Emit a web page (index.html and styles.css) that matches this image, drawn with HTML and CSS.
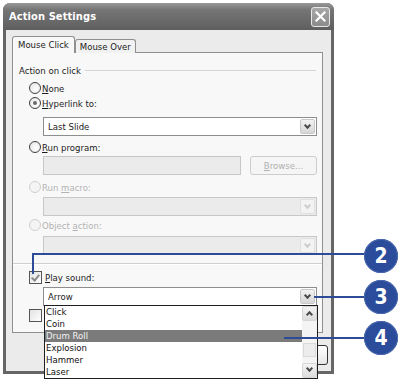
FILE: index.html
```html
<!DOCTYPE html>
<html lang="en">
<head>
    <meta charset="UTF-8">
    <title>Action Settings</title>
    <link rel="stylesheet" href="styles.css">
</head>
<body>
    <div class="stage">
        <div class="window">
            <div class="titlebar">
                <span class="title">Action Settings</span>
                <span class="close">
                    <svg width="11" height="11" viewBox="0 0 11 11"><path d="M1.5 1.5 L9.5 9.5 M9.5 1.5 L1.5 9.5" stroke="#fff" stroke-width="2.2" stroke-linecap="square"/></svg>
                </span>
            </div>
            <div class="client">
                <div class="tabs">
                    <div class="tab active">Mouse Click</div>
                    <div class="tab">Mouse Over</div>
                </div>
                <div class="panel">
                    <div class="grouphead"><span>Action on click</span><span class="rule"></span></div>

                    <div class="opt opt-none"><span class="radio"></span><span><u>N</u>one</span></div>
                    <div class="opt opt-link"><span class="radio checked"></span><span><u>H</u>yperlink to:</span></div>
                    <div class="field select f-link"><span class="value">Last Slide</span><span class="drop"></span></div>

                    <div class="opt opt-prog"><span class="radio"></span><span><u>R</u>un program:</span></div>
                    <div class="field-row f-prog">
                        <div class="textbox"></div>
                        <div class="browse"><u>B</u>rowse...</div>
                    </div>

                    <div class="opt opt-macro disabled"><span class="radio"></span><span>Run <u>m</u>acro:</span></div>
                    <div class="field select disabled f-macro"><span class="value"></span><span class="drop"></span></div>

                    <div class="opt opt-obj disabled"><span class="radio"></span><span>Object <u>a</u>ction:</span></div>
                    <div class="field select disabled f-obj"><span class="value"></span><span class="drop"></span></div>

                    <div class="separator"></div>

                    <div class="opt opt-sound"><span class="check checked"></span><span><u>P</u>lay sound:</span></div>
                    <div class="field select f-sound"><span class="value">Arrow</span><span class="drop"></span></div>

                    <!-- label is covered by the open list, only its first letter peeks out -->
                    <div class="opt opt-hl"><span class="check"></span><span class="covered">Highlight click</span></div>
                </div>
                <div class="actions">
                    <div class="btn">OK</div>
                    <div class="btn">Cancel</div>
                </div>
            </div>
        </div>

        <!-- open drop-down list of the Play sound box -->
        <div class="listbox">
            <ul class="items">
                <li>Click</li>
                <li>Coin</li>
                <li class="selected">Drum Roll</li>
                <li>Explosion</li>
                <li>Hammer</li>
                <li>Laser</li>
            </ul>
            <div class="scrollbar">
                <span class="sb-btn up"></span>
                <span class="sb-thumb"></span>
                <span class="sb-btn down"></span>
            </div>
        </div>

        <!-- numbered callouts -->
        <div class="callout-line c2-h"></div>
        <div class="callout-line c2-v"></div>
        <div class="callout-line c3-h"></div>
        <div class="callout-line c4-h"></div>
        <div class="badge b2">2</div>
        <div class="badge b3">3</div>
        <div class="badge b4">4</div>
    </div>
</body>
</html>
```

FILE: styles.css
```css
body {
    margin: 0;
    background: #fff;
    font-family: "DejaVu Sans Condensed", "DejaVu Sans", sans-serif;
    font-size: 9.5px;
    color: #1c1c1c;
}
.stage {
    position: relative;
    width: 400px;
    height: 382px;
    overflow: hidden;
}
.window {
    margin: 3px 0 0 3px;
    width: 331px;
    height: 371px;
    background: #666;
    border-radius: 7px 7px 0 0;
    display: flex;
    flex-direction: column;
}
.titlebar {
    height: 27px;
    flex: none;
    display: flex;
    align-items: center;
    justify-content: space-between;
    padding: 0 4px 0 6px;
    border-radius: 7px 7px 0 0;
    background: linear-gradient(#9a9a9a, #757575 25%, #686868 70%, #5e5e5e);
}
.title {
    color: #fff;
    font-weight: bold;
    font-size: 11px;
    letter-spacing: 0.1px;
}
.close {
    width: 17px;
    height: 18px;
    border: 1px solid #e8e8e8;
    border-radius: 3px;
    background: linear-gradient(#a8a8a8, #8a8a8a);
    display: flex;
    align-items: center;
    justify-content: center;
}
.client {
    flex: 1;
    margin: 0 3px 3px 3px;
    background: #ebebeb;
    padding-top: 6px;
}
.tabs {
    display: flex;
    align-items: flex-end;
    padding-left: 6px;
    height: 17px;
    margin-bottom: -1px;
}
.tab {
    height: 13px;
    line-height: 13px;
    padding: 0 4px;
    border: 1px solid #8f8f8f;
    border-bottom: 0;
    border-radius: 3px 3px 0 0;
    background: #f1f1f1;
    color: #222;
}
.tab.active {
    height: 16px;
    line-height: 16px;
    padding: 0 5px;
    background: #f8f8f8;
    position: relative;
    z-index: 1;
}
.panel {
    margin-left: 6px;
    width: 311px;
    height: 281px;
    box-sizing: border-box;
    border: 1px solid #8f8f8f;
    background: #f8f8f8;
    padding-top: 11px;
}
.grouphead {
    display: flex;
    align-items: center;
    height: 12px;
    margin: 0 6px 0 6px;
}
.grouphead .rule {
    flex: 1;
    margin-left: 4px;
    border-top: 1px solid #d4d4d4;
}
.opt {
    display: flex;
    align-items: center;
    gap: 1px;
    height: 14px;
    margin-left: 16px;
}
.opt.disabled {
    color: #b3b3b3;
}
.covered {
    width: 3px;
    overflow: hidden;
    white-space: nowrap;
}
.radio {
    width: 10px;
    height: 10px;
    border: 1px solid #404040;
    border-radius: 50%;
    background: radial-gradient(circle at 60% 60%, #fff, #e2e2e2);
    display: flex;
    align-items: center;
    justify-content: center;
}
.radio.checked::after {
    content: "";
    width: 4px;
    height: 4px;
    border-radius: 50%;
    background: #6a6a6a;
}
.disabled .radio {
    border-color: #cfcfcf;
    background: #f4f4f4;
}
.check {
    width: 11px;
    height: 11px;
    border: 1px solid #555;
    background: linear-gradient(135deg, #e2e2e2, #fff);
    margin-right: 2px;
    position: relative;
}
.check.checked::after {
    content: "";
    position: absolute;
    left: 3px;
    top: 1px;
    width: 3px;
    height: 6px;
    border: solid #8a8a8a;
    border-width: 0 2px 2px 0;
    transform: rotate(40deg);
}
.opt-none { margin-top: 5px; }
.opt-link { margin-top: 1px; }
.f-link { margin-top: 7px; }
.opt-prog { margin-top: 4px; }
.f-prog { margin-top: 2px; }
.opt-macro { margin-top: 5px; }
.f-macro { margin-top: 3px; }
.opt-obj { margin-top: 2px; }
.f-obj { margin-top: 4px; }
.opt-sound { margin-top: 5px; }
.f-sound { margin-top: 3px; }
.opt-hl { margin-top: 2px; }
.field {
    margin-left: 30px;
    margin-right: 5px;
    height: 19px;
    box-sizing: border-box;
}
.select {
    display: flex;
    align-items: center;
    justify-content: space-between;
    border: 1px solid #8d8d8d;
    background: #fff;
    padding: 0 1px 0 4px;
}
.select.disabled {
    border-color: #c8c8c8;
    background: #ebebeb;
}
.drop {
    width: 15px;
    height: 15px;
    box-sizing: border-box;
    border: 1px solid #c9c9c9;
    border-radius: 2px;
    background: linear-gradient(#f2f2f2, #d6d6d6);
    position: relative;
}
.drop::after {
    content: "";
    position: absolute;
    left: 4px;
    top: 3px;
    width: 3px;
    height: 3px;
    border: solid #4a4a4a;
    border-width: 0 2px 2px 0;
    transform: rotate(45deg);
}
.disabled .drop {
    border-color: #e0e0e0;
    background: #f3f3f3;
}
.disabled .drop::after {
    border-color: #cdcdcd;
}
.field-row {
    display: flex;
    justify-content: space-between;
    margin-left: 30px;
    margin-right: 5px;
    height: 19px;
}
.textbox {
    width: 198px;
    border: 1px solid #c6c6c6;
    background: #ebebeb;
    box-sizing: border-box;
}
.browse {
    width: 67px;
    box-sizing: border-box;
    border: 1px solid #cdcdcd;
    border-radius: 3px;
    background: #f5f5f5;
    color: #b0b0b0;
    text-align: center;
    line-height: 17px;
}
.separator {
    margin: 8px 0 0 0;
    height: 0;
    border-top: 1px solid #d0d0d0;
    border-bottom: 1px solid #fff;
}
.actions {
    display: flex;
    justify-content: flex-end;
    gap: 6px;
    margin-top: 12px;
    padding-right: 3px;
}
.btn {
    width: 63px;
    height: 20px;
    box-sizing: border-box;
    border: 1px solid #333;
    border-radius: 3px;
    background: linear-gradient(#fff, #e6e6e6);
    text-align: center;
    line-height: 18px;
}
.listbox {
    position: absolute;
    left: 44px;
    top: 305px;
    width: 274px;
    height: 74px;
    box-sizing: border-box;
    border: 1px solid #1e1e1e;
    background: #fff;
    display: flex;
}
.items {
    list-style: none;
    margin: 0;
    padding: 0;
    flex: 1;
}
.items li {
    height: 12px;
    line-height: 12px;
    padding-left: 1px;
    color: #111;
}
.items li.selected {
    background: #7b7b7b;
    color: #f2f2f2;
}
.scrollbar {
    width: 15px;
    background: #f4f4f4;
    display: flex;
    flex-direction: column;
    justify-content: space-between;
    position: relative;
}
.sb-btn {
    height: 15px;
    box-sizing: border-box;
    border: 1px solid #d6d6d6;
    border-radius: 2px;
    background: linear-gradient(#f4f4f4, #dcdcdc);
    position: relative;
}
.sb-btn::after {
    content: "";
    position: absolute;
    left: 4px;
    width: 3px;
    height: 3px;
    border: solid #4a4a4a;
    border-width: 2px 0 0 2px;
}
.sb-btn.up::after {
    top: 5px;
    transform: rotate(45deg);
}
.sb-btn.down::after {
    top: 2px;
    transform: rotate(225deg);
}
.sb-thumb {
    height: 12px;
    margin: 16px 1px 0 1px;
    border: 1px solid #dadada;
    background: #ececec;
}
.callout-line {
    position: absolute;
    background: #2d4b96;
}
.c2-h { left: 32px; top: 253px; width: 334px; height: 2px; }
.c2-v { left: 32px; top: 253px; width: 2px; height: 21px; }
.c3-h { left: 314px; top: 296px; width: 52px; height: 2px; }
.c4-h { left: 284px; top: 337px; width: 82px; height: 2px; }
.badge {
    position: absolute;
    left: 364px;
    width: 34px;
    height: 34px;
    border-radius: 50%;
    background: #2b4c9b;
    box-shadow: inset 0 0 0 1px #4a68ad;
    color: #fff;
    font-family: "DejaVu Sans Condensed", "DejaVu Sans", sans-serif;
    font-weight: bold;
    font-size: 21px;
    line-height: 34px;
    text-align: center;
}
.b2 { top: 239px; }
.b3 { top: 280px; }
.b4 { top: 321px; }
```
